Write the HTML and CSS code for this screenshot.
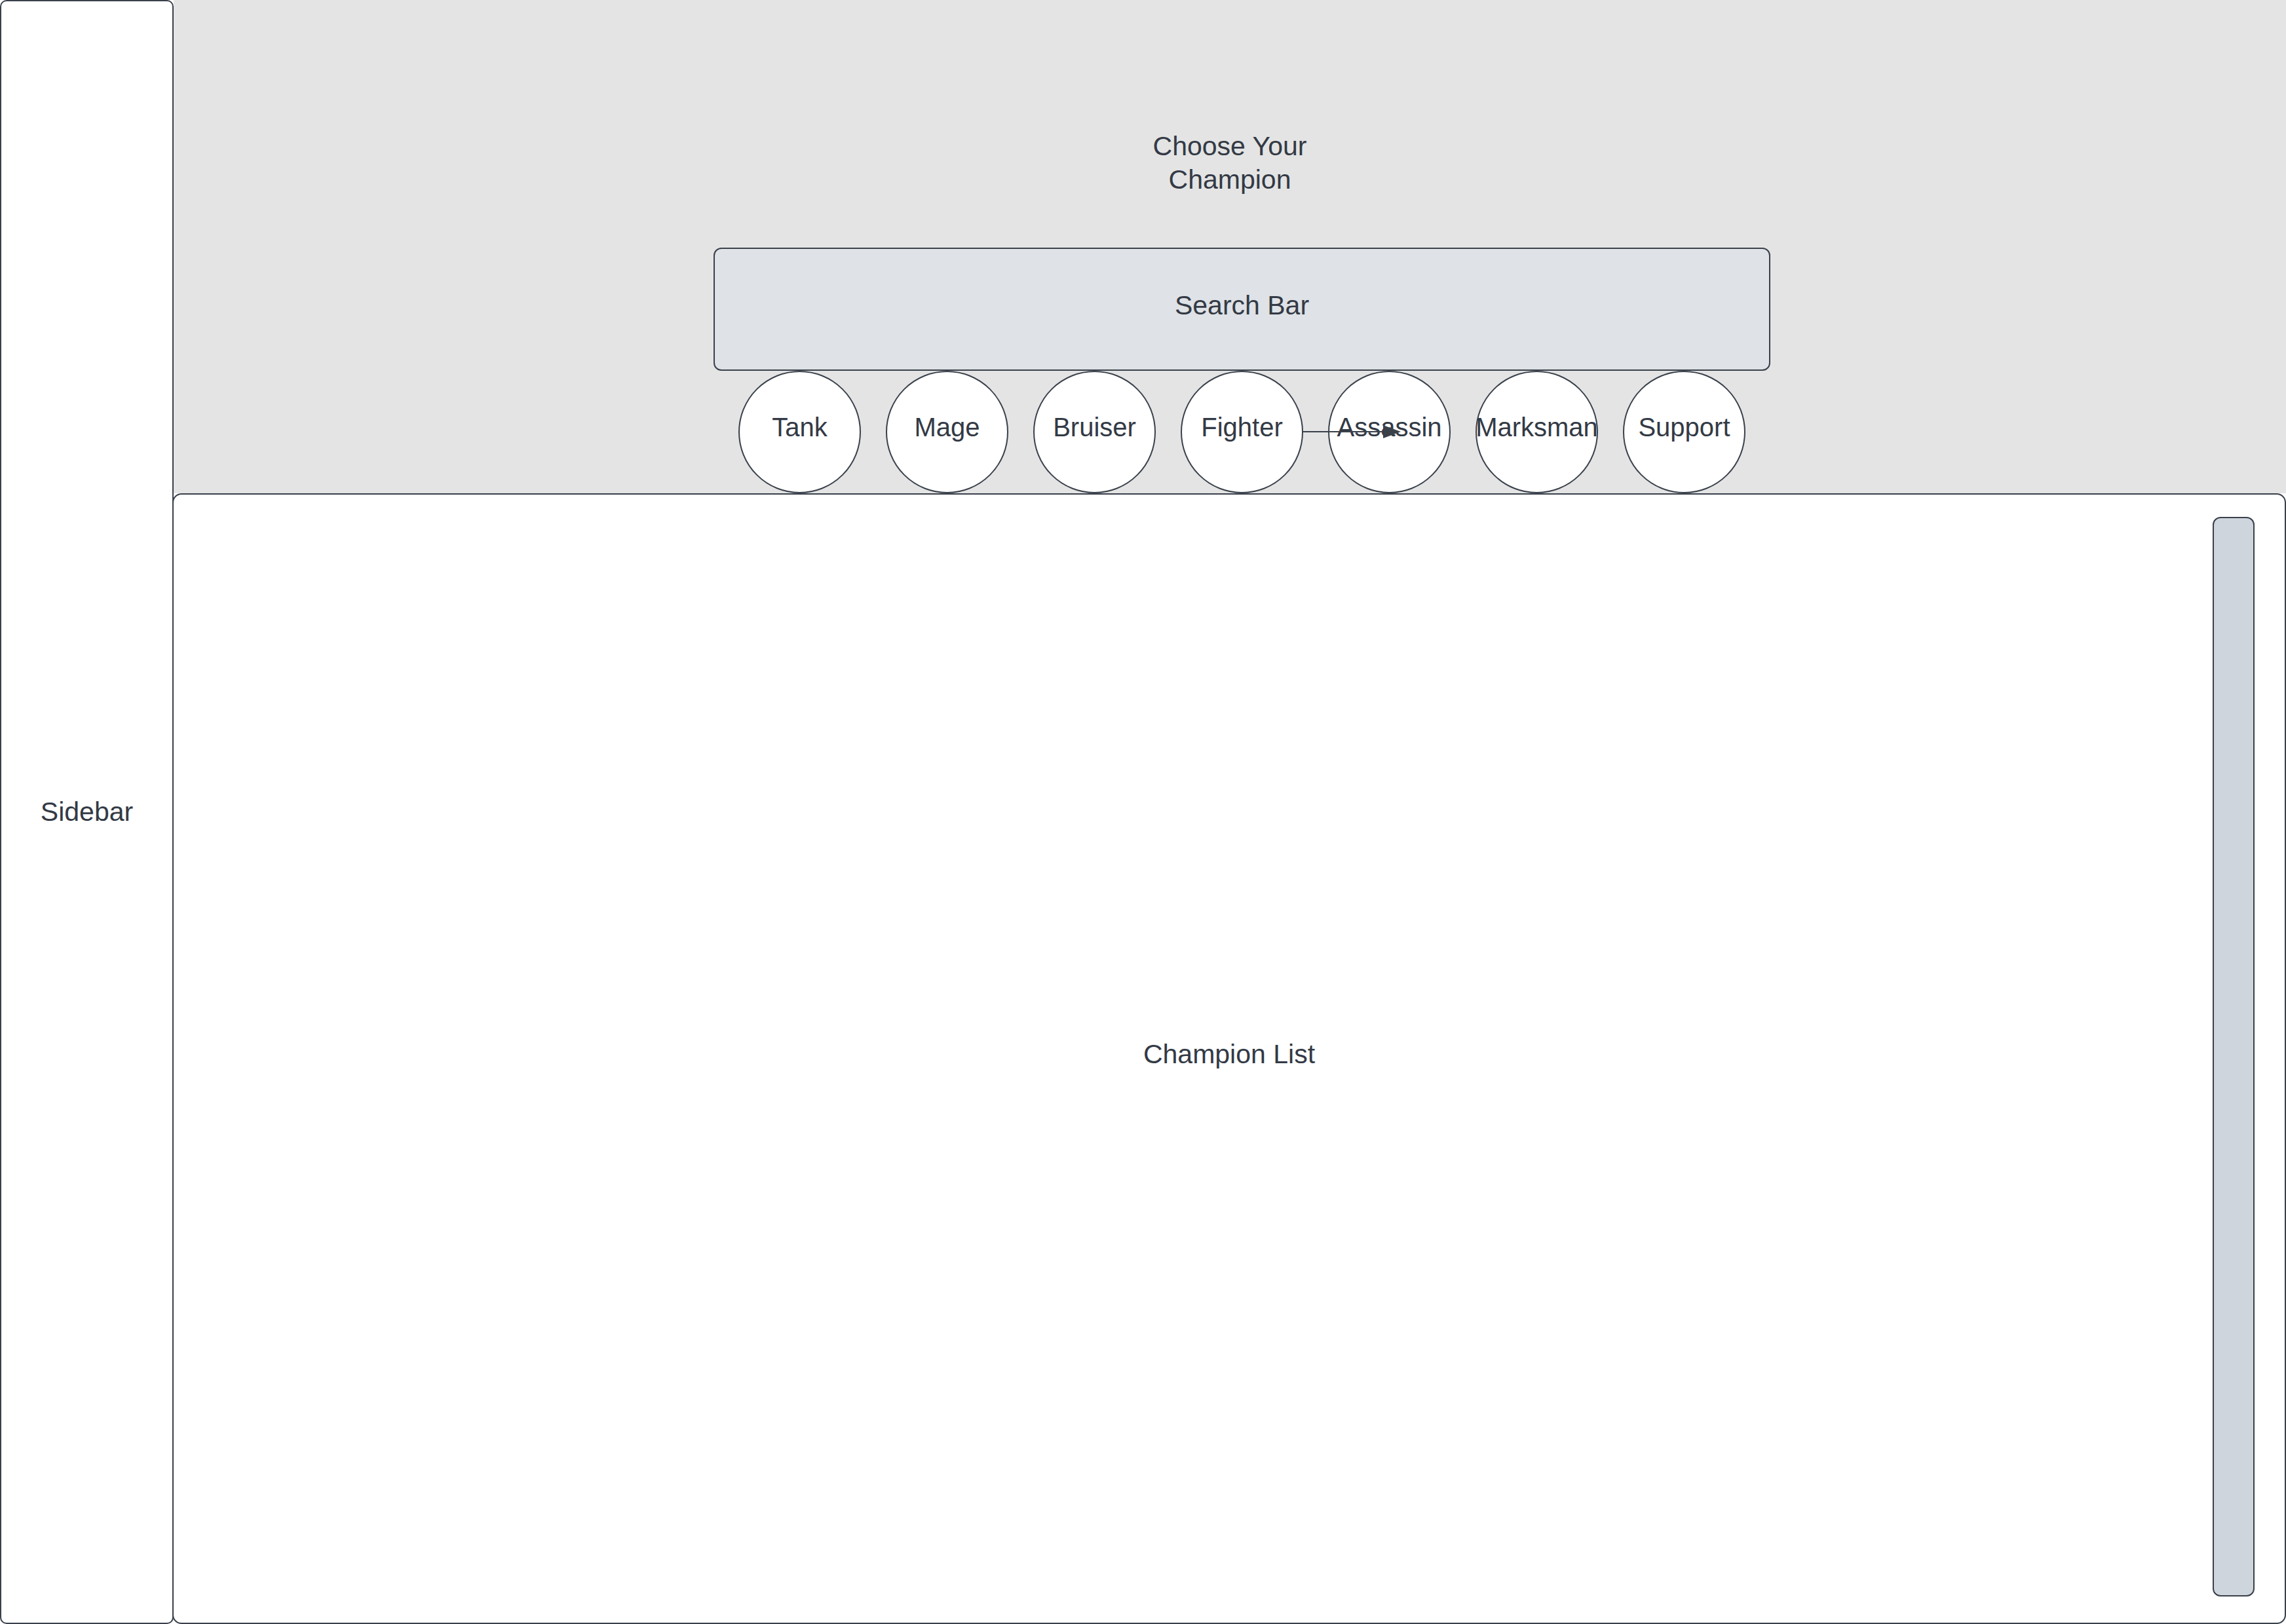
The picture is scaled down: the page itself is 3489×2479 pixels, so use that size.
FILE: index.html
```html
<!DOCTYPE html>
<html lang="en">
<head>
<meta charset="utf-8">
<title>Choose Your Champion</title>
<link rel="stylesheet" href="styles.css">
</head>
<body>
<div class="app">
  <aside class="sidebar"><span class="sidebar-label">Sidebar</span></aside>
  <main class="main">
    <header class="hero">
      <h1 class="title">Choose Your<br>Champion</h1>
      <div class="search-wrap">
        <div class="search"><span class="search-label">Search Bar</span></div>
        <div class="roles">
          <div class="role"><span>Tank</span></div>
          <div class="role"><span>Mage</span></div>
          <div class="role"><span>Bruiser</span></div>
          <div class="role"><span>Fighter</span></div>
          <div class="role"><span>Assassin</span></div>
          <div class="role"><span>Marksman</span></div>
          <div class="role"><span>Support</span></div>
          <svg class="arrow" width="152" height="20" viewBox="0 0 152 20" aria-hidden="true">
            <line x1="0" y1="10" x2="126" y2="10" stroke="#3a414b" stroke-width="2"/>
            <polygon points="123,0 150,10 123,20" fill="#3a414b"/>
          </svg>
        </div>
      </div>
    </header>
    <section class="list">
      <span class="list-label">Champion List</span>
      <div class="scrollbar"></div>
    </section>
  </main>
</div>
</body>
</html>
```

FILE: styles.css
```css
html, body {
  margin: 0;
  padding: 0;
  background: #ffffff;
}

body {
  font-family: "Liberation Sans", Arial, sans-serif;
  color: #333a45;
}

.app {
  display: flex;
  width: 3489px;
  height: 2479px;
}

.sidebar {
  box-sizing: border-box;
  width: 265px;
  flex: 0 0 265px;
  height: 100%;
  border: 2px solid #3a414b;
  border-radius: 10px;
  background: #ffffff;
  display: flex;
  align-items: center;
  justify-content: center;
  font-size: 41px;
}

.main {
  flex: 1;
  display: flex;
  flex-direction: column;
  min-width: 0;
}

.hero {
  height: 753px;
  background: #e4e4e4;
  display: flex;
  flex-direction: column;
  box-sizing: border-box;
  padding-top: 198px;
}

.title {
  margin: 0;
  font-weight: normal;
  font-size: 41px;
  line-height: 51px;
  text-align: center;
  color: #333a45;
}

.search-wrap {
  margin-top: 78px;
  margin-left: 824px;
  width: 1613px;
}

.search {
  box-sizing: border-box;
  height: 188px;
  border: 2px solid #3a414b;
  border-radius: 12px;
  background: #dfe2e6;
  display: flex;
  align-items: center;
  justify-content: center;
  padding-bottom: 12px;
  font-size: 41px;
}

.roles {
  position: relative;
  display: flex;
  justify-content: center;
  gap: 38px;
}

.role {
  box-sizing: border-box;
  width: 187px;
  height: 187px;
  flex: 0 0 187px;
  border: 2px solid #3a414b;
  border-radius: 50%;
  background: #ffffff;
  display: flex;
  align-items: center;
  justify-content: center;
  padding-bottom: 14px;
  font-size: 40px;
  white-space: nowrap;
}

.arrow {
  position: absolute;
  left: 899px;
  top: 83px;
}

.list {
  position: relative;
  flex: 1;
  margin-left: -2px;
  box-sizing: border-box;
  border: 2px solid #3a414b;
  border-radius: 14px;
  background: #ffffff;
  display: flex;
  align-items: center;
  justify-content: center;
  padding-bottom: 14px;
  font-size: 41px;
}

.scrollbar {
  position: absolute;
  top: 34px;
  right: 46px;
  bottom: 40px;
  width: 64px;
  box-sizing: border-box;
  border: 2px solid #3a414b;
  border-radius: 12px;
  background: #cfd5dc;
}
```
